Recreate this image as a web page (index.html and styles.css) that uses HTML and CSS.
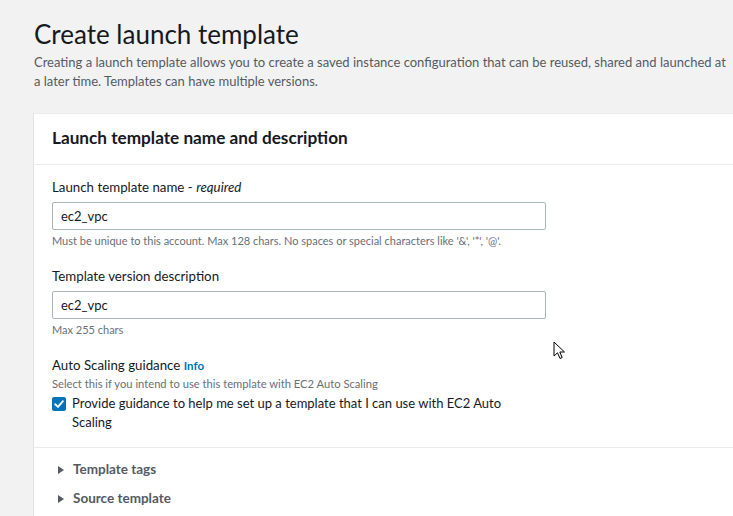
FILE: index.html
```html
<!DOCTYPE html>
<html>
<head>
<meta charset="utf-8">
<link rel="stylesheet" href="styles.css">
</head>
<body>
<div class="page">
  <h1 class="title">Create launch template</h1>
  <p class="intro">Creating a launch template allows you to create a saved instance configuration that can be reused, shared and launched at a later time. Templates can have multiple versions.</p>
  <section class="card">
    <header class="card-head">
      <h2>Launch template name and description</h2>
    </header>
    <div class="card-body">
      <div class="field">
        <label class="label">Launch template name - <em>required</em></label>
        <div class="input">ec2_vpc</div>
        <div class="hint">Must be unique to this account. Max 128 chars. No spaces or special characters like '&amp;', '*', '@'.</div>
      </div>
      <div class="field">
        <label class="label">Template version description</label>
        <div class="input">ec2_vpc</div>
        <div class="hint">Max 255 chars</div>
      </div>
      <div class="field asg">
        <div class="label">Auto Scaling guidance <span class="info">Info</span></div>
        <div class="desc">Select this if you intend to use this template with EC2 Auto Scaling</div>
        <div class="check-row">
          <span class="checkbox"><svg viewBox="0 0 14 14" width="14" height="14"><path d="M3.2 7.2 L6 9.9 L10.9 4.2" fill="none" stroke="#fff" stroke-width="2" stroke-linecap="round" stroke-linejoin="round"/></svg></span>
          <span class="check-text">Provide guidance to help me set up a template that I can use with EC2 Auto Scaling</span>
        </div>
      </div>
    </div>
    <div class="expanders">
      <div class="exp"><span class="tri"></span>Template tags</div>
      <div class="exp"><span class="tri"></span>Source template</div>
    </div>
  </section>
</div>
<svg class="cursor" width="14" height="20" viewBox="0 0 14 20"><path d="M1 1 L1 15 L4.5 11.8 L7 17.5 L9.2 16.5 L6.8 11 L11.5 11 Z" fill="#fff" stroke="#000" stroke-width="1" stroke-linejoin="round"/></svg>
</body>
</html>
```
FILE: styles.css
```css
html, body {
  margin: 0;
  padding: 0;
  background: #f2f2f2;
  overflow: hidden;
  width: 733px;
  height: 516px;
}
body {
  font-family: Lato, "Noto Sans", sans-serif;
  color: #16191f;
  position: relative;
}
.page {
  padding: 17px 0 0 34px;
}
.title {
  margin: 0;
  font-size: 26px;
  font-weight: 400;
  line-height: 34px;
  color: #16191f;
}
.intro {
  margin: 2px 0 0;
  font-size: 13px;
  line-height: 19px;
  color: #545b64;
  width: 699px;
}
.card {
  margin: 22px 0 0 -1px;
  width: 700px;
  background: #fff;
  border-left: 1px solid #e3e3e3;
  border-top: 1px solid #eaeded;
  min-height: 420px;
}
.card-head {
  padding: 13px 18px 16px;
  border-bottom: 1px solid #eaeded;
}
.card-head h2 {
  margin: 0;
  font-size: 17.2px;
  font-weight: 700;
  line-height: 21px;
  color: #16191f;
}
.card-body {
  padding: 13px 18px 15px;
  border-bottom: 1px solid #eaeded;
}
.field {
  margin-bottom: 19px;
}
.field.asg {
  margin-bottom: 0;
}
.label {
  display: block;
  font-size: 13.3px;
  line-height: 18px;
  color: #16191f;
  margin-bottom: 6px;
}
.label em {
  font-style: italic;
}
.info {
  color: #0073bb;
  font-weight: 700;
  font-size: 11.5px;
}
.input {
  width: 476px;
  height: 26px;
  border: 1px solid #aab7b8;
  border-radius: 2px;
  padding: 0 8px;
  font-size: 13px;
  line-height: 26px;
  color: #16191f;
}
.hint {
  font-size: 11px;
  line-height: 14px;
  color: #687078;
  margin-top: 4px;
}
.asg .label {
  margin-bottom: 0;
}
.desc {
  font-size: 11.2px;
  line-height: 14px;
  color: #687078;
  margin-top: 2px;
}
.check-row {
  display: flex;
  align-items: flex-start;
  gap: 6px;
  margin-top: 3px;
  width: 460px;
}
.checkbox {
  flex: none;
  width: 14px;
  height: 14px;
  margin-top: 3px;
  background: #0073bb;
  border-radius: 2px;
  display: flex;
}
.check-text {
  font-size: 13px;
  line-height: 19px;
  color: #16191f;
}
.expanders {
  padding: 12px 18px 0 24px;
}
.exp {
  display: flex;
  align-items: center;
  font-size: 13.5px;
  font-weight: 700;
  line-height: 19px;
  color: #545b64;
  margin-bottom: 10px;
}
.tri {
  width: 0;
  height: 0;
  border-left: 6px solid #545b64;
  border-top: 4px solid transparent;
  border-bottom: 4px solid transparent;
  margin-right: 9px;
}
.cursor {
  position: absolute;
  left: 553px;
  top: 341px;
}
```
